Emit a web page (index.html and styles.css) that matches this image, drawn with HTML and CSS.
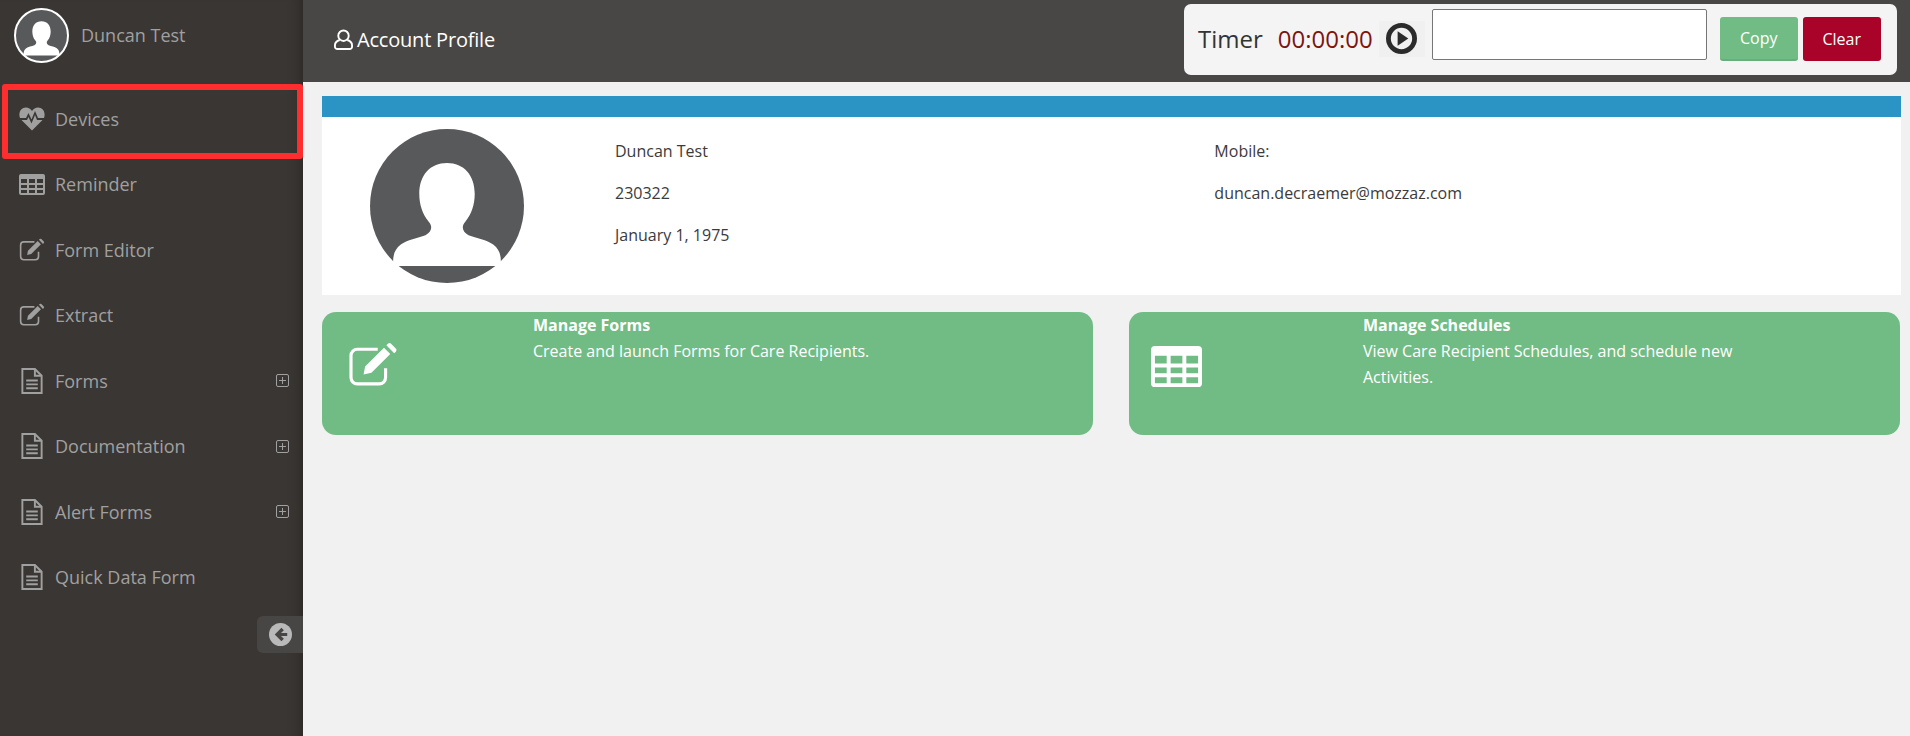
FILE: index.html
```html
<!DOCTYPE html>
<html lang="en">
<head>
    <meta charset="UTF-8">
    <title>Account Profile</title>
    <link rel="stylesheet" href="styles.css">
</head>
<body>
<svg class="defs" width="0" height="0">
    <symbol id="i-person" viewBox="0 0 100 100">
        <path d="M50 22c-11 0-18 8-18 20 0 7 2 13 6 18 3 3 2 7-2 9-5 2-12 3-16 6-4 3-5 7-5 11 0 2 1 3 3 3h64c2 0 3-1 3-3 0-4-1-8-5-11-4-3-11-4-16-6-4-2-5-6-2-9 4-5 6-11 6-18 0-12-7-20-18-20z"/>
    </symbol>
    <symbol id="i-edit" viewBox="0 0 32 28">
        <path class="ln" d="M19 4H6a4 4 0 0 0-4 4v14a4 4 0 0 0 4 4h14a4 4 0 0 0 4-4v-6"/>
        <path d="M10 20l1-5L23 3l4 4-12 12-5 1zM24.500 1.500l1-1a1.500 1.500 0 0 1 2 0l3 3a1.500 1.500 0 0 1 0 2l-1 1z"/>
    </symbol>
    <symbol id="i-file" viewBox="0 0 24 27">
        <path class="ln" d="M2 1h13l7 7v18H2z"/>
        <path class="ln" d="M15 1v7h7"/>
        <path d="M6 12h12v2H6zM6 16h12v2H6zM6 20h12v2H6z"/>
    </symbol>
    <symbol id="i-table" viewBox="0 0 26 21">
        <path fill-rule="evenodd" d="M2 0h22a2 2 0 0 1 2 2v17a2 2 0 0 1-2 2H2a2 2 0 0 1-2-2V2a2 2 0 0 1 2-2zM2 5v4h6V5zm8 0v4h6V5zm8 0v4h6V5zM2 11v3h6v-3zm8 0v3h6v-3zm8 0v3h6v-3zM2 16v3h6v-3zm8 0v3h6v-3zm8 0v3h6v-3z"/>
    </symbol>
</svg>

<div class="app">
    <aside class="sidebar">
        <div class="user">
            <span class="user-pic">
                <svg><use href="#i-person"/></svg>
            </span>
            <span class="user-name">Duncan Test</span>
        </div>
        <nav class="nav">
            <a class="nav-item">
                <svg class="nav-icon" viewBox="0 0 26 23">
                    <path d="M13 23L2.500 12.500H8l1.500-3 3 6.500 3.500-8.500 2 5H23.500zM1 10.500C-1 5 2 0 7 0c2.500 0 4.500 1.500 6 3.500C14.500 1.500 16.500 0 19 0c5 0 8 5 6 10.500h-6l-3-7-3.500 8.500-3-6.500-2.500 5z"/>
                </svg>
                <span>Devices</span>
            </a>
            <a class="nav-item">
                <svg class="nav-icon nav-icon-table"><use href="#i-table"/></svg>
                <span>Reminder</span>
            </a>
            <a class="nav-item">
                <svg class="nav-icon"><use href="#i-edit"/></svg>
                <span>Form Editor</span>
            </a>
            <a class="nav-item">
                <svg class="nav-icon"><use href="#i-edit"/></svg>
                <span>Extract</span>
            </a>
            <a class="nav-item">
                <svg class="nav-icon"><use href="#i-file"/></svg>
                <span>Forms</span>
                <span class="plus"></span>
            </a>
            <a class="nav-item">
                <svg class="nav-icon"><use href="#i-file"/></svg>
                <span>Documentation</span>
                <span class="plus"></span>
            </a>
            <a class="nav-item">
                <svg class="nav-icon"><use href="#i-file"/></svg>
                <span>Alert Forms</span>
                <span class="plus"></span>
            </a>
            <a class="nav-item">
                <svg class="nav-icon"><use href="#i-file"/></svg>
                <span>Quick Data Form</span>
            </a>
        </nav>
        <div class="collapse-row">
            <span class="collapse">
                <svg viewBox="0 0 24 24" width="23" height="23">
                    <circle cx="12" cy="12" r="12" fill="#b9b9b9"/>
                    <path d="M13 5l-7 7 7 7 2.500-2.500-3-3H19v-3h-6.500l3-3z" fill="#484644"/>
                </svg>
            </span>
        </div>
    </aside>

    <div class="main">
        <header class="topbar">
            <h1 class="page-title">
                <svg viewBox="0 0 20 22" width="19" height="21">
                    <circle cx="10" cy="7" r="5.500"/>
                    <path d="M6 11.500C3 12.500 1 14 1 17v1.500A2.500 2.500 0 0 0 3.500 21h13a2.500 2.500 0 0 0 2.500-2.500V17c0-3-2-4.500-5-5.500"/>
                </svg>
                Account Profile
            </h1>
            <div class="timer">
                <span class="timer-label">Timer</span>
                <span class="timer-value">00:00:00</span>
                <button class="play">
                    <svg viewBox="0 0 32 32" width="31" height="31">
                        <circle cx="16" cy="16" r="13.500" fill="none" stroke="#2b2b2b" stroke-width="5"/>
                        <path d="M12 8.500L23 16l-11 7.500z" fill="#2b2b2b"/>
                    </svg>
                </button>
                <input class="timer-note" type="text">
                <button class="btn btn-copy">Copy</button>
                <button class="btn btn-clear">Clear</button>
            </div>
        </header>

        <section class="content">
            <div class="profile">
                <div class="profile-bar"></div>
                <div class="profile-body">
                    <div class="profile-pic">
                        <svg><use href="#i-person"/></svg>
                    </div>
                    <div class="profile-col">
                        <p>Duncan Test</p>
                        <p>230322</p>
                        <p>January 1, 1975</p>
                    </div>
                    <div class="profile-col">
                        <p>Mobile:</p>
                        <p>duncan.decraemer@mozzaz.com</p>
                    </div>
                </div>
            </div>

            <div class="cards">
                <a class="card">
                    <svg class="card-icon card-icon-edit"><use href="#i-edit"/></svg>
                    <div class="card-text">
                        <strong>Manage Forms</strong>
                        <p>Create and launch Forms for Care Recipients.</p>
                    </div>
                </a>
                <a class="card">
                    <svg class="card-icon card-icon-table"><use href="#i-table"/></svg>
                    <div class="card-text">
                        <strong>Manage Schedules</strong>
                        <p>View Care Recipient Schedules, and schedule new Activities.</p>
                    </div>
                </a>
            </div>
        </section>
    </div>
</div>

<div class="highlight"></div>
</body>
</html>
```

FILE: styles.css
```css
* {
    box-sizing: border-box;
}

body {
    margin: 0;
    font-family: "Open Sans", "Liberation Sans", sans-serif;
    font-size: 16px;
    color: #3b3b3b;
    overflow: hidden;
}

.defs {
    position: absolute;
}

.ln {
    fill: none;
    stroke: currentColor;
    stroke-width: 2;
}

.app {
    display: flex;
    height: 736px;
}

/* sidebar */
.sidebar {
    width: 303px;
    flex: none;
    background: #3a3633;
    box-shadow: inset -14px 0 12px -12px #2a2725;
    color: #a0a0a0;
}

.user {
    display: flex;
    align-items: center;
    height: 84px;
    padding: 0 0 14px 14px;
}

.user-pic {
    width: 55px;
    height: 55px;
    border: 2px solid #fff;
    border-radius: 50%;
    background: #58595b;
    fill: #fff;
    display: flex;
}

.user-pic svg {
    width: 100%;
    height: 100%;
}

.user-name {
    margin-left: 12px;
    font-size: 18px;
}

.nav-item {
    display: flex;
    align-items: center;
    height: 65.500px;
    padding: 4px 0 0 19px;
    font-size: 18px;
    white-space: nowrap;
}

.nav-icon {
    width: 26px;
    height: 26px;
    margin-right: 10px;
    fill: currentColor;
    flex: none;
}

.nav-icon-table {
    height: 21px;
}

.plus {
    width: 13px;
    height: 13px;
    margin-left: auto;
    margin-right: 14px;
    border: 1px solid currentColor;
    border-radius: 2px;
    background:
        linear-gradient(currentColor, currentColor) center / 7px 1px no-repeat,
        linear-gradient(currentColor, currentColor) center / 1px 7px no-repeat;
}

.collapse-row {
    display: flex;
    justify-content: flex-end;
    padding-top: 8px;
}

.collapse {
    width: 46px;
    height: 37px;
    display: flex;
    align-items: center;
    justify-content: center;
    background: #484644;
    border-radius: 6px 0 0 6px;
}

/* top */
.main {
    flex: 1;
    min-width: 0;
    background: #f1f1f1;
}

.topbar {
    display: flex;
    align-items: center;
    justify-content: space-between;
    height: 82px;
    padding: 0 13px 3px 31px;
    background: #494745;
}

.page-title {
    display: flex;
    align-items: center;
    gap: 4px;
    margin: 0;
    font-size: 20px;
    font-weight: 400;
    letter-spacing: -0.2px;
    color: #fff;
}

.page-title svg {
    fill: none;
    stroke: #fff;
    stroke-width: 2;
}

.timer {
    display: flex;
    align-items: center;
    width: 713px;
    height: 71px;
    padding: 0 14px 2px 14px;
    background: #f4f4f4;
    border-radius: 7px;
}

.timer-label {
    font-size: 24px;
    color: #333;
}

.timer-value {
    margin-left: 15px;
    font-size: 24px;
    color: #7b1414;
}

.play {
    width: 46px;
    height: 36px;
    margin-left: 6px;
    padding: 0;
    display: flex;
    align-items: center;
    justify-content: center;
    background: #f0f0f0;
    border: 0;
}

.timer-note {
    width: 275px;
    height: 51px;
    margin: -8px 0 0 7px;
    background: #fff;
    border: 1px solid #767676;
    border-radius: 2px;
}

.btn {
    width: 78px;
    height: 44px;
    padding: 0;
    border: 0;
    border-radius: 3px;
    font-family: inherit;
    font-size: 16px;
    color: #fff;
}

.btn-copy {
    margin-left: 13px;
    background: #71bc84;
    border-bottom: 2px solid #69ad7b;
}

.btn-clear {
    margin-left: 5px;
    background: #a90329;
}

/* content */
.content {
    padding: 14px 9px 0 19px;
}

.profile {
    background: #fff;
}

.profile-bar {
    height: 21px;
    background: #2b94c5;
}

.profile-body {
    display: flex;
    height: 178px;
}

.profile-pic {
    width: 154px;
    height: 154px;
    margin: 12px 0 0 48px;
    border-radius: 50%;
    background: #58595b;
    fill: #fff;
    flex: none;
}

.profile-pic svg {
    width: 100%;
    height: 100%;
}

.profile-col {
    padding: 13px 0 0 91px;
    width: 716px;
}

.profile-col + .profile-col {
    padding-left: 0;
}

.profile-col p {
    margin: 0;
    line-height: 42px;
}

.cards {
    display: grid;
    grid-template-columns: 771px 771px;
    gap: 36px;
    margin-top: 17px;
}

.card {
    display: flex;
    height: 123px;
    padding-left: 23px;
    background: #71bc84;
    border-radius: 14px;
    color: #fff;
    fill: #fff;
}

.card-icon {
    flex: none;
    margin-top: 31px;
    color: #fff;
}

.card-icon-edit {
    width: 56px;
    height: 44px;
}

.card-icon-edit .ln {
    stroke-width: 2.500;
}

.card-icon-table {
    width: 51px;
    height: 43px;
    margin-top: 33px;
    margin-left: -1px;
}

.card-text {
    width: 434px;
    margin-left: 132px;
    line-height: 26px;
}

.card-text strong {
    display: block;
}

.card-text p {
    margin: 0;
}

.card:last-child .card-text {
    margin-left: 161px;
    width: 430px;
}

/* red box drawn on top of the screenshot */
.highlight {
    position: absolute;
    left: 2px;
    top: 84px;
    width: 301px;
    height: 75px;
    border: 6px solid #fe2e2e;
    border-radius: 3px;
}
```
